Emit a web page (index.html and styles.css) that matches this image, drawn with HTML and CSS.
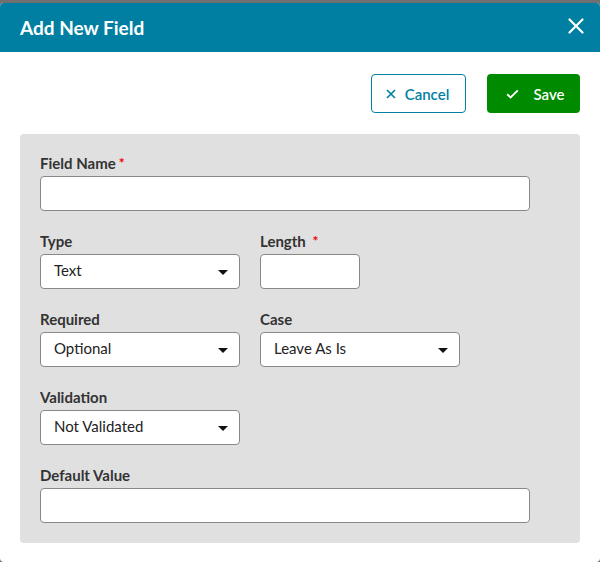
FILE: index.html
```html
<!DOCTYPE html>
<html>
<head>
    <title>Add New Field</title>
    <link rel="stylesheet" href="styles.css">
</head>
<body>
    <div class="modal">
        <div class="modal-header">
            <h1>Add New Field</h1>
            <button class="close-btn" aria-label="Close">
                <svg width="16" height="16" viewBox="0 0 16 16"><path d="M1.5 1.5 L14.5 14.5 M14.5 1.5 L1.5 14.5" stroke="#fff" stroke-width="2.2" stroke-linecap="round"/></svg>
            </button>
        </div>

        <div class="modal-body">
            <div class="actions">
                <button class="btn btn-cancel">
                    <svg width="10" height="10" viewBox="0 0 10 10"><path d="M1 1 L9 9 M9 1 L1 9" stroke="#007fa3" stroke-width="1.6"/></svg>
                    Cancel
                </button>
                <button class="btn btn-save">
                    <svg width="13" height="10" viewBox="0 0 13 10"><path d="M1.2 5.2 L4.6 8.4 L11.8 1.4" fill="none" stroke="#fff" stroke-width="1.9"/></svg>
                    Save
                </button>
            </div>

            <div class="panel">
                <div class="field">
                    <label>Field Name<span class="req">*</span></label>
                    <input type="text" class="input wide">
                </div>

                <div class="row">
                    <div class="field">
                        <label>Type</label>
                        <div class="select">Text</div>
                    </div>
                    <div class="field">
                        <label>Length <span class="req">*</span></label>
                        <input type="text" class="input short">
                    </div>
                </div>

                <div class="row">
                    <div class="field">
                        <label>Required</label>
                        <div class="select">Optional</div>
                    </div>
                    <div class="field">
                        <label>Case</label>
                        <div class="select">Leave As Is</div>
                    </div>
                </div>

                <div class="field">
                    <label>Validation</label>
                    <div class="select">Not Validated</div>
                </div>

                <div class="field">
                    <label>Default Value</label>
                    <input type="text" class="input wide">
                </div>
            </div>
        </div>
    </div>
</body>
</html>
```

FILE: styles.css
```css
body {
    margin: 0;
    height: 562px;
    background: #707070;
    font-family: Lato, "Open Sans", sans-serif;
    overflow: hidden;
}

.modal {
    margin-top: 3px;
    height: 559px;
    background: #fff;
    border-radius: 4px;
    overflow: hidden;
}

.modal-header {
    height: 49px;
    background: #007fa3;
    display: flex;
    align-items: center;
    justify-content: space-between;
    padding: 0 16px 0 20px;
}

.modal-header h1 {
    margin: 0;
    color: #fff;
    font-size: 19px;
    font-weight: bold;
}

.close-btn {
    background: none;
    border: none;
    padding: 0;
    display: flex;
    cursor: pointer;
    margin-top: -3px;
}

.modal-body {
    padding: 22px 20px 0 20px;
}

.actions {
    display: flex;
    justify-content: flex-end;
    gap: 21px;
    margin-bottom: 21px;
}

.btn {
    height: 39px;
    border-radius: 4px;
    font-family: inherit;
    font-size: 15px;
    font-weight: 600;
    display: flex;
    align-items: center;
    justify-content: center;
    cursor: pointer;
}

.btn-cancel {
    width: 95px;
    background: #fff;
    border: 1px solid #007fa3;
    color: #007fa3;
    gap: 9px;
    padding-left: 4px;
}

.btn-save {
    width: 93px;
    background: #008a00;
    border: none;
    color: #fff;
    gap: 14px;
    padding-left: 10px;
}

.panel {
    background: #e0e0e0;
    border-radius: 4px;
    padding: 20px;
    display: flex;
    flex-direction: column;
    gap: 21px;
}

.row {
    display: flex;
    gap: 20px;
}

.field {
    display: flex;
    flex-direction: column;
    gap: 4px;
}

.field label {
    font-size: 15px;
    font-weight: bold;
    color: #333;
    line-height: 18px;
}

.req {
    color: #e00;
    margin-left: 3px;
    font-size: 14px;
    vertical-align: top;
}

.input {
    height: 35px;
    box-sizing: border-box;
    border: 1px solid #888;
    border-radius: 4px;
    background: #fff;
    font-family: inherit;
    font-size: 15px;
    padding: 0 13px;
}

.wide {
    width: 490px;
}

.short {
    width: 100px;
}

.select {
    width: 200px;
    height: 35px;
    box-sizing: border-box;
    border: 1px solid #888;
    border-radius: 4px;
    background: #fff;
    font-size: 15px;
    color: #222;
    padding: 0 13px 3px 13px;
    display: flex;
    align-items: center;
    position: relative;
}

.select:after {
    content: "";
    position: absolute;
    right: 11px;
    top: 15px;
    border-left: 5px solid transparent;
    border-right: 5px solid transparent;
    border-top: 5px solid #111;
}
```
